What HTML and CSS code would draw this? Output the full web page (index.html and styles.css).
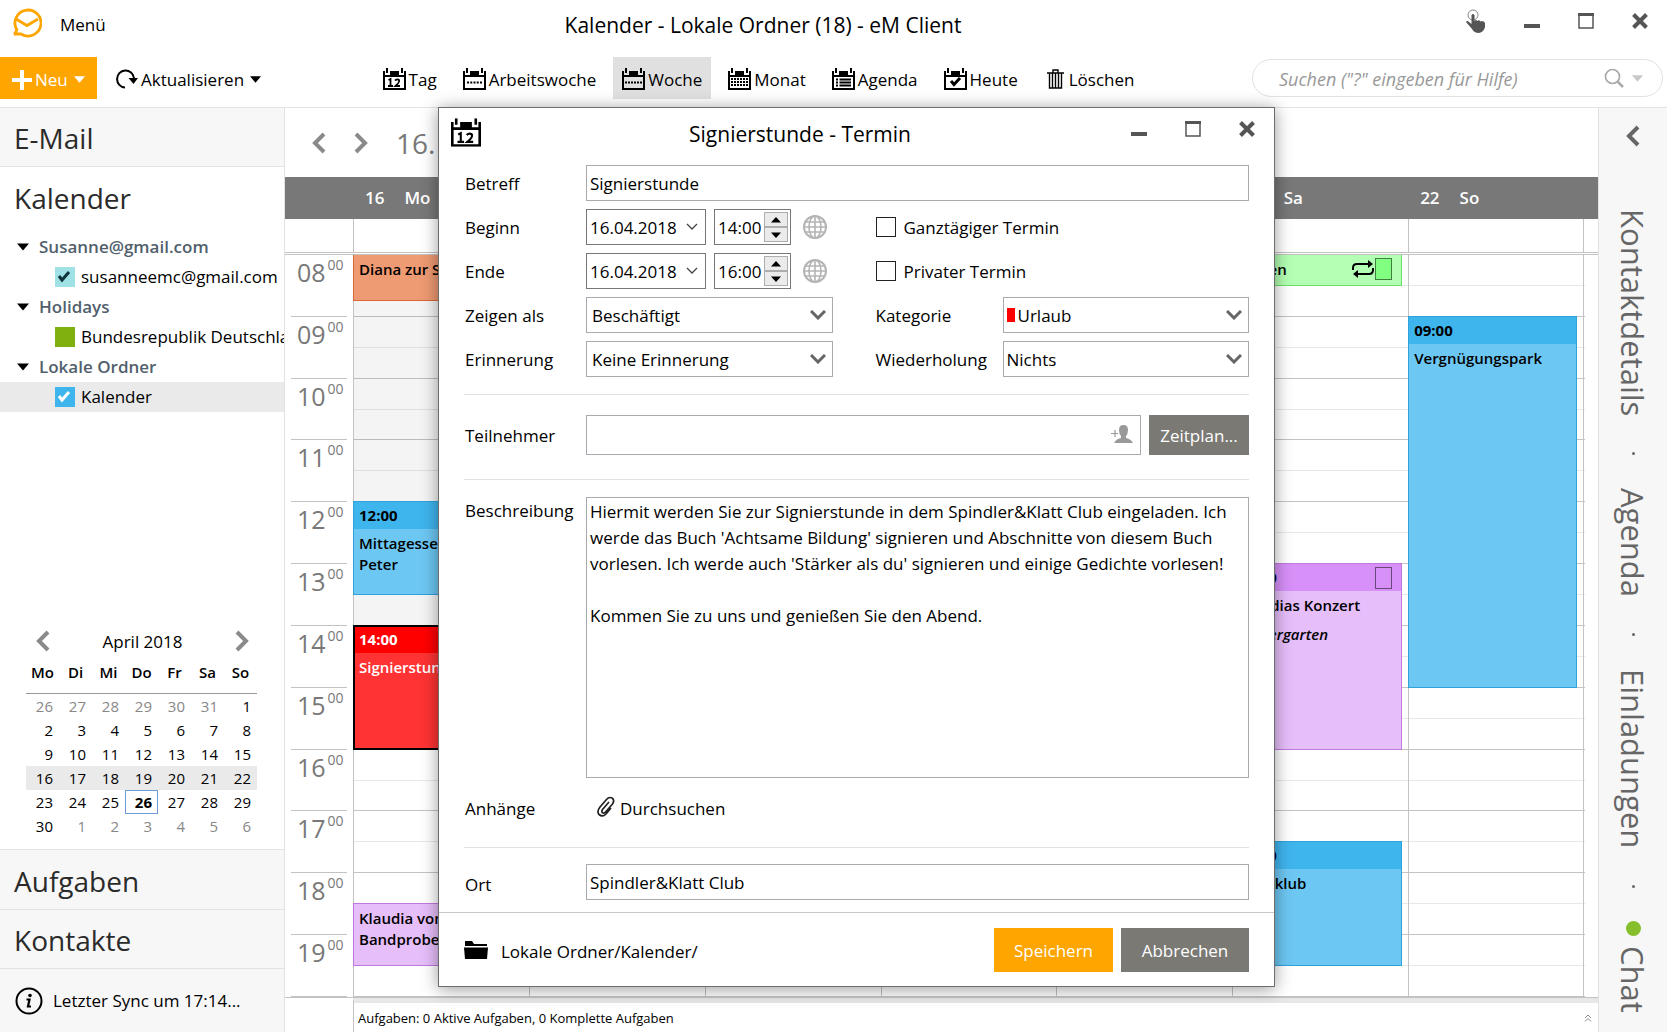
FILE: index.html
```html
<!DOCTYPE html>
<html lang="de">
<head>
<meta charset="utf-8">
<title>Kalender - Lokale Ordner (18) - eM Client</title>
<link rel="stylesheet" href="styles.css">
</head>
<body>
<svg class="sprite" aria-hidden="true">
  <symbol id="cal" viewBox="0 0 23 22">
    <path d="M1 8V21H22V8" fill="none" stroke="currentColor" stroke-width="2"/>
    <path d="M0 3H2V7H7V3H16V7H21V3H23V9H0Z" fill="currentColor"/>
    <path d="M4 0V5M19 0V5" stroke="currentColor" stroke-width="2"/>
  </symbol>
  <symbol id="left" viewBox="0 0 14 22"><path d="M12 2L3 11L12 20" fill="none" stroke="currentColor" stroke-width="4"/></symbol>
  <symbol id="right" viewBox="0 0 14 22"><path d="M2 2L11 11L2 20" fill="none" stroke="currentColor" stroke-width="4"/></symbol>
  <symbol id="tri" viewBox="0 0 12 7"><path d="M0 0H12L6 7Z" fill="currentColor"/></symbol>
  <symbol id="down" viewBox="0 0 16 10"><path d="M1 1L8 8L15 1" fill="none" stroke="currentColor" stroke-width="3"/></symbol>
  <symbol id="thin" viewBox="0 0 12 8"><path d="M1 1L6 6L11 1" fill="none" stroke="#444" stroke-width="1.3"/></symbol>
  <symbol id="min" viewBox="0 0 16 16"><path d="M0 13H16" stroke="currentColor" stroke-width="4"/></symbol>
  <symbol id="max" viewBox="0 0 16 16"><path d="M1 1H15V15H1Z" fill="none" stroke="currentColor" stroke-width="1.5"/><path d="M0 1.5H16" stroke="currentColor" stroke-width="3"/></symbol>
  <symbol id="close" viewBox="0 0 16 16"><path d="M1.500 1.500L14.500 14.500M14.500 1.500L1.500 14.500" stroke="currentColor" stroke-width="4"/></symbol>
  <symbol id="tick" viewBox="0 0 20 20"><path d="M4 9L7 13L14 5" fill="none" stroke="currentColor" stroke-width="3"/></symbol>
  <symbol id="globe" viewBox="0 0 24 24"><g fill="none" stroke="currentColor" stroke-width="1.6"><circle cx="12" cy="12" r="11" stroke-width="2"/><ellipse cx="12" cy="12" rx="6" ry="11"/><path d="M12 1V23M1 12H23M3 7H21M3 17H21"/></g></symbol>
</svg>

<div class="app">
  <header class="titlebar">
    <svg class="logo" viewBox="0 0 30 30"><g fill="none" stroke="#ffa500" stroke-width="2.800"><path d="M5 22A13 13 0 1 1 9 26L2 26Q4 25 5 21"/><path d="M4 11L15 17.500L26 11"/></g></svg>
    <button class="menu">Menü</button>
    <h1>Kalender - Lokale Ordner (18) - eM Client</h1>
    <div class="winctl">
      <button aria-label="Touch"><svg class="hand" viewBox="0 0 20 24"><circle cx="7" cy="6" r="5" fill="none" stroke="#888" stroke-width="1"/><path d="M5.500 6Q7 4 8.500 6V12Q10 10 11.500 12Q13 10.500 14.500 12.500Q17 11 19 14V18Q18 23 13 24Q8 24 6 20L0 13Q1 11 3 13L5.500 15Z" fill="currentColor"/></svg></button>
      <button aria-label="Minimieren"><svg><use href="#min"/></svg></button>
      <button aria-label="Maximieren"><svg><use href="#max"/></svg></button>
      <button aria-label="Schließen"><svg><use href="#close"/></svg></button>
    </div>
  </header>

  <nav class="toolbar">
    <div class="tools-left">
      <button class="new"><svg class="plus" viewBox="0 0 20 20"><path d="M10 0V20M0 10H20" stroke="#fff" stroke-width="4"/></svg>Neu<svg class="tri"><use href="#tri"/></svg></button>
      <button class="refresh"><svg class="refresh-icon" viewBox="0 0 22 20"><path d="M9 18.500A8.500 8.500 0 1 1 18 9" fill="none" stroke="#000" stroke-width="2"/><path d="M12.500 9H22L17.500 15Z"/></svg>Aktualisieren<svg class="tri"><use href="#tri"/></svg></button>
    </div>
    <div class="views">
      <button><svg class="cal" viewBox="0 0 23 22"><use href="#cal"/><path d="M5.500 12L7.500 11V18M5 18H10M12 12.500Q14.500 10.500 16 12Q17 14 12.500 18H17" fill="none" stroke="#000" stroke-width="1.800"/></svg>Tag</button>
      <button><svg class="cal" viewBox="0 0 23 22"><use href="#cal"/><path d="M4 14.500H19" stroke="#000" stroke-width="2" stroke-dasharray="2 1.250"/></svg>Arbeitswoche</button>
      <button class="active"><svg class="cal" viewBox="0 0 23 22"><use href="#cal"/><path d="M3 14.500H20" stroke="#000" stroke-width="2" stroke-dasharray="2 1"/></svg>Woche</button>
      <button><svg class="cal" viewBox="0 0 23 22"><use href="#cal"/><path d="M3 11H20M3 14H20M3 17H20" stroke="#000" stroke-width="2" stroke-dasharray="2 1"/></svg>Monat</button>
      <button><svg class="cal" viewBox="0 0 23 22"><use href="#cal"/><path d="M4 11.500H6M7.500 11.500H19M4 14.500H6M7.500 14.500H19M4 17.500H6M7.500 17.500H19" stroke="#000" stroke-width="2"/></svg>Agenda</button>
      <button><svg class="cal" viewBox="0 0 23 22"><use href="#cal"/><path d="M7 13L10 16.500L16 10" fill="none" stroke="#000" stroke-width="3"/></svg>Heute</button>
      <button><svg class="trash" viewBox="0 0 17 20"><path d="M0 4H17M6 4V1H11V4M2.500 4V19H14.500V4M5.500 4V19M8.500 4V19M11.500 4V19" fill="none" stroke="#000" stroke-width="1.400"/></svg>Löschen</button>
    </div>
    <label class="search">
      <input type="search" placeholder="Suchen (&quot;?&quot; eingeben für Hilfe)" aria-label="Suchen">
      <svg class="lens" viewBox="0 0 20 20"><circle cx="8.500" cy="8.500" r="7" fill="none" stroke="currentColor" stroke-width="1.700"/><path d="M13.500 13.500L19 19" stroke="currentColor" stroke-width="2.500"/></svg>
      <svg class="tri"><use href="#tri"/></svg>
    </label>
  </nav>

  <div class="body">
    <aside class="sidebar">
      <a class="section" href="#mail">E-Mail</a>
      <div class="current">
        <h2>Kalender</h2>
        <ul class="tree">
          <li class="group"><svg class="tri"><use href="#tri"/></svg>Susanne@gmail.com</li>
          <li class="leaf"><input type="checkbox" id="c1" checked><label for="c1"><svg class="box aqua"><use href="#tick"/></svg>susanneemc@gmail.com</label></li>
          <li class="group"><svg class="tri"><use href="#tri"/></svg>Holidays</li>
          <li class="leaf"><input type="checkbox" id="c2"><label for="c2"><svg class="box green"></svg>Bundesrepublik Deutschland</label></li>
          <li class="group"><svg class="tri"><use href="#tri"/></svg>Lokale Ordner</li>
          <li class="leaf selected"><input type="checkbox" id="c3" checked><label for="c3"><svg class="box blue"><use href="#tick"/></svg>Kalender</label></li>
        </ul>
        <div class="mini">
          <div class="mini-head">
            <button aria-label="Zurück"><svg class="chev"><use href="#left"/></svg></button>
            <span>April 2018</span>
            <button aria-label="Weiter"><svg class="chev"><use href="#right"/></svg></button>
          </div>
          <table>
            <thead><tr><th>Mo</th><th>Di</th><th>Mi</th><th>Do</th><th>Fr</th><th>Sa</th><th>So</th></tr></thead>
            <tbody>
              <tr><td class="out">26</td><td class="out">27</td><td class="out">28</td><td class="out">29</td><td class="out">30</td><td class="out">31</td><td>1</td></tr>
              <tr><td>2</td><td>3</td><td>4</td><td>5</td><td>6</td><td>7</td><td>8</td></tr>
              <tr><td>9</td><td>10</td><td>11</td><td>12</td><td>13</td><td>14</td><td>15</td></tr>
              <tr class="week"><td>16</td><td>17</td><td>18</td><td>19</td><td>20</td><td>21</td><td>22</td></tr>
              <tr><td>23</td><td>24</td><td>25</td><td class="today">26</td><td>27</td><td>28</td><td>29</td></tr>
              <tr><td>30</td><td class="out">1</td><td class="out">2</td><td class="out">3</td><td class="out">4</td><td class="out">5</td><td class="out">6</td></tr>
            </tbody>
          </table>
        </div>
      </div>
      <a class="section top" href="#tasks">Aufgaben</a>
      <a class="section" href="#contacts">Kontakte</a>
      <div class="sync"><svg viewBox="0 0 28 28"><circle cx="14" cy="14" r="12.500" fill="none" stroke="#000" stroke-width="2"/><circle cx="15" cy="8.500" r="1.800"/><path d="M11.500 12.500H14.500L13 19.500H16" fill="none" stroke="#000" stroke-width="2.200"/></svg>Letzter Sync um 17:14...</div>
    </aside>

    <main class="calendar">
      <div class="period">
        <button aria-label="Vorige Woche"><svg class="chev"><use href="#left"/></svg></button>
        <button aria-label="Nächste Woche"><svg class="chev"><use href="#right"/></svg></button>
        <span>16. - 22. April 2018</span>
      </div>
      <div class="dayheads">
        <div><b>16</b><b>Mo</b></div><div><b>17</b><b>Di</b></div><div><b>18</b><b>Mi</b></div><div><b>19</b><b>Do</b></div><div><b>20</b><b>Fr</b></div><div><b>21</b><b>Sa</b></div><div><b>22</b><b>So</b></div>
      </div>
      <div class="allday"><div></div><div></div><div></div><div></div><div></div><div></div><div></div></div>
      <div class="grid">
        <ol class="hours">
          <li>08<sup>00</sup></li><li>09<sup>00</sup></li><li>10<sup>00</sup></li><li>11<sup>00</sup></li><li>12<sup>00</sup></li><li>13<sup>00</sup></li><li>14<sup>00</sup></li><li>15<sup>00</sup></li><li>16<sup>00</sup></li><li>17<sup>00</sup></li><li>18<sup>00</sup></li><li>19<sup>00</sup></li>
        </ol>
        <div class="slots">
          <i></i><i></i><i></i><i></i><i></i><i></i><i></i><i></i><i></i><i></i><i></i><i></i><i></i><i></i><i></i><i></i><i></i><i></i><i></i><i></i><i></i><i></i><i></i><i></i>
        </div>
        <div class="days">
          <div class="day closed">
            <article class="event orange s0800 e0845"><p>Diana zur Schule</p></article>
            <article class="event sky s1200 e1330"><h3>12:00</h3><p>Mittagessen mit<br>Peter</p></article>
            <article class="event red s1400 e1600"><h3>14:00</h3><p>Signierstunde</p></article>
            <article class="event violet s1830 e1930"><p>Klaudia von der<br>Bandprobe</p></article>
          </div>
          <div class="day"></div><div class="day"></div><div class="day"></div><div class="day"></div>
          <div class="day">
            <article class="event lime s0800 e0830"><p>Joggen</p><span class="marks"><svg class="repeat" viewBox="0 0 22 18"><path d="M1 10V8Q1 4 5 4H17M21 8V10Q21 14 17 14H5" fill="none" stroke="#000" stroke-width="2"/><path d="M16 0L21 4L16 8ZM6 10L1 14L6 18Z"/></svg><i class="mark"></i></span></article>
            <article class="event violet s1300 e1600"><h3>13:00</h3><p>Klaudias Konzert</p><p class="place">Kindergarten</p><span class="marks"><i class="mark"></i></span></article>
            <article class="event sky s1730 e1930"><h3>17:30</h3><p>Buchklub</p></article>
          </div>
          <div class="day">
            <article class="event sky s0900 e1500"><h3>09:00</h3><p>Vergnügungspark</p></article>
          </div>
        </div>
      </div>
      <footer class="tasks"><span>Aufgaben: 0 Aktive Aufgaben, 0 Komplette Aufgaben</span><svg viewBox="0 0 8 8"><path d="M1 4L4 1L7 4M1 7.500L4 4.500L7 7.500" fill="none" stroke="#888" stroke-width="1"/></svg></footer>
    </main>

    <aside class="rail">
      <button aria-label="Aufklappen"><svg class="chev"><use href="#left"/></svg></button>
      <div class="rail-links">
        <a href="#details">Kontaktdetails</a><i></i><a href="#agenda">Agenda</a><i></i><a href="#invites">Einladungen</a><i></i><b></b><a href="#chat">Chat</a>
      </div>
    </aside>
  </div>

  <section class="dialog" role="dialog" aria-labelledby="dlg">
    <header>
      <svg class="dlg-icon" viewBox="0 0 23 22"><use href="#cal"/><path d="M5.500 12.500L7.500 11.500V18M5 18.200H10M12 13Q14 11 16 12.500Q17 14.500 12.500 18.200H17" fill="none" stroke="#000" stroke-width="1.600"/></svg>
      <h2 id="dlg">Signierstunde - Termin</h2>
      <div class="winctl">
        <button aria-label="Minimieren"><svg><use href="#min"/></svg></button>
        <button aria-label="Maximieren"><svg><use href="#max"/></svg></button>
        <button aria-label="Schließen"><svg><use href="#close"/></svg></button>
      </div>
    </header>
    <form>
      <div class="fields">
        <label for="subject">Betreff</label>
        <input class="wide" id="subject" type="text" value="Signierstunde">

        <label for="d1">Beginn</label>
        <div class="when">
          <span class="date"><input id="d1" type="text" value="16.04.2018"><svg><use href="#thin"/></svg></span>
          <span class="time"><input type="text" value="14:00" aria-label="Beginn Uhrzeit"><span class="spin"><button type="button" aria-label="Später"><svg viewBox="0 0 10 6"><path d="M0 5.500H10L5 0Z"/></svg></button><button type="button" aria-label="Früher"><svg viewBox="0 0 10 6"><path d="M0 .5H10L5 6Z"/></svg></button></span></span>
          <svg class="globe"><use href="#globe"/></svg>
        </div>
        <label class="check"><input type="checkbox">Ganztägiger Termin</label>

        <label for="d2">Ende</label>
        <div class="when">
          <span class="date"><input id="d2" type="text" value="16.04.2018"><svg><use href="#thin"/></svg></span>
          <span class="time"><input type="text" value="16:00" aria-label="Ende Uhrzeit"><span class="spin"><button type="button" aria-label="Später"><svg viewBox="0 0 10 6"><path d="M0 5.500H10L5 0Z"/></svg></button><button type="button" aria-label="Früher"><svg viewBox="0 0 10 6"><path d="M0 .5H10L5 6Z"/></svg></button></span></span>
          <svg class="globe"><use href="#globe"/></svg>
        </div>
        <label class="check"><input type="checkbox">Privater Termin</label>

        <label for="show">Zeigen als</label>
        <span class="select"><select id="show"><option>Beschäftigt</option></select><svg><use href="#down"/></svg></span>
        <label class="second" for="cat">Kategorie</label>
        <span class="select swatch"><select id="cat"><option>Urlaub</option></select><svg><use href="#down"/></svg></span>

        <label for="rem">Erinnerung</label>
        <span class="select"><select id="rem"><option>Keine Erinnerung</option></select><svg><use href="#down"/></svg></span>
        <label class="second" for="rep">Wiederholung</label>
        <span class="select tight"><select id="rep"><option>Nichts</option></select><svg><use href="#down"/></svg></span>
      </div>
      <hr>
      <div class="row people">
        <label for="att">Teilnehmer</label>
        <span class="att"><input id="att" type="text"><svg viewBox="0 0 22 18"><path d="M4 5V12M0 8.500H7" stroke="#999" stroke-width="1.200"/><path d="M8 5Q8 0 12.500 0Q17 0 17 5Q17 9 15 11V13Q20 14 22 18H3Q5 14 10 13V11Q8 9 8 5Z" fill="#999"/></svg></span>
        <button type="button" class="btn grey">Zeitplan...</button>
      </div>
      <hr>
      <div class="row desc">
        <label for="desc">Beschreibung</label>
        <textarea id="desc">Hiermit werden Sie zur Signierstunde in dem Spindler&amp;Klatt Club eingeladen. Ich
werde das Buch 'Achtsame Bildung' signieren und Abschnitte von diesem Buch
vorlesen. Ich werde auch 'Stärker als du' signieren und einige Gedichte vorlesen!

Kommen Sie zu uns und genießen Sie den Abend.</textarea>
      </div>
      <div class="row files">
        <label for="browse">Anhänge</label>
        <button type="button" id="browse" class="browse"><svg viewBox="0 0 20 22"><path d="M13 6L6.500 13.500Q5 16 7 17Q8.500 17.500 10 15.500L16.500 8Q19 4 16 2Q13 .5 10.500 3.500L4 11Q.5 15.500 3 18.500Q6.500 21.500 10 18L15 12" fill="none" stroke="#222" stroke-width="1.700"/></svg>Durchsuchen</button>
      </div>
      <hr>
      <div class="row">
        <label for="ort">Ort</label>
        <input id="ort" type="text" value="Spindler&amp;Klatt Club">
      </div>
    </form>
    <footer>
      <svg class="folder" viewBox="0 0 24 18"><path d="M1 0H8L10 3H23V5H1ZM0 6.500H24L23 18H1Z"/></svg>
      <span>Lokale Ordner/Kalender/</span>
      <button class="btn save">Speichern</button>
      <button class="btn grey cancel">Abbrechen</button>
    </footer>
  </section>
</div>
</body>
</html>
```

FILE: styles.css
```css
* { box-sizing: border-box; }
body {
  margin: 0;
  background: #fff;
  color: #000;
  font: 17px/24px "Open Sans", "Noto Sans", sans-serif;
}
.sprite { display: none; }
svg { display: block; flex: none; }
h1, h2, h3, p, ul, ol { margin: 0; padding: 0; font-weight: 400; list-style: none; }
a { color: inherit; text-decoration: none; }
button, input, select, textarea { font: inherit; color: inherit; margin: 0; padding: 0; border: 0; background: none; border-radius: 0; outline: 0; }
button { display: flex; align-items: center; white-space: nowrap; }

.app { position: relative; display: flex; flex-direction: column; min-height: 100vh; }

/* title bar */
.titlebar { display: grid; grid-template-columns: 60px minmax(0, 1fr) auto minmax(0, 1fr) auto; align-items: center; height: 50px; padding-right: 19px; }
.logo { width: 30px; height: 30px; margin: 0 0 4px 12px; }
.menu { justify-self: start; }
h1 { font-size: 21px; line-height: 28px; }
.winctl { display: flex; justify-content: flex-end; gap: 38px; grid-column-end: -1; color: #555; padding-bottom: 8px; }
.winctl svg { width: 16px; height: 16px; }
.winctl .hand { width: 20px; height: 24px; }

/* toolbar */
.toolbar { display: flex; justify-content: space-between; align-items: center; height: 58px; padding: 7px 4px 8px 0; border-bottom: 1px solid #e2e2e2; }
.tools-left, .views { display: flex; }
.tools-left { gap: 10px; }
.views button, .new, .refresh { height: 42px; gap: 3px; padding: 3px 9px 0; }
.toolbar .new { width: 97px; background: #ffa500; color: #fff; padding: 3px 12px 0; }
.plus { width: 20px; height: 20px; }
.toolbar .tri { width: 11px; height: 7px; margin-left: 3px; }
.refresh-icon { width: 22px; height: 20px; margin-bottom: 2px; }
.views { gap: 8px; margin-right: 5px; }
.views .active { background: #e0e0e0; }
.cal { width: 23px; height: 22px; margin-bottom: 1px; }
.trash { width: 17px; height: 20px; margin: 0 2px 2px 3px; }
.search { display: flex; align-items: center; gap: 8px; width: 411px; height: 38px; padding: 0 19px 0 26px; border: 1px solid #e2e2e2; border-radius: 19px; color: #aaa; }
.search input { flex: 1; min-width: 0; padding-top: 2px; font-size: 18px; font-style: italic; appearance: none; }
.search input::placeholder { color: #999; opacity: 1; }
.lens { width: 20px; height: 20px; }
.search .tri { margin-left: 0; color: #c8c8c8; }

.body { display: flex; flex: 1; }

/* left sidebar */
.sidebar { display: flex; flex-direction: column; width: 285px; flex: none; border-right: 1px solid #e2e2e2; background: #f7f7f7; }
.section { display: block; height: 59px; padding: 9px 14px; border-bottom: 1px solid #e2e2e2; font-size: 28px; line-height: 42px; color: #2b2b2b; }
.section.top { height: 61px; padding-top: 10px; border-top: 1px solid #e2e2e2; }
.current { display: flex; flex-direction: column; flex: 1; background: #fff; overflow: hidden; }
.current h2 { padding: 9px 14px 11px; font-size: 28px; line-height: 44px; color: #2b2b2b; }
.tree li { display: flex; align-items: center; height: 30px; white-space: nowrap; }
.tree { padding-top: 1px; }
.tree .group { gap: 10px; padding-left: 17px; font-weight: 600; color: #51606c; }
.tree .tri { width: 12px; height: 8px; color: #000; }
.leaf { padding-left: 55px; }
.leaf input { position: absolute; opacity: 0; }
.leaf label { display: flex; align-items: center; gap: 6px; }
.selected { background: #eaeaea; }
.box { width: 20px; height: 20px; }
.aqua { background: #a0e1e6; color: #10333c; }
.green { background: #7fb010; }
.blue { background: #3fb5ee; color: #fff; }
.mini { margin-top: auto; padding: 0 27px 11px 26px; }
.mini-head { display: flex; justify-content: space-between; padding: 0 8px 0 10px; height: 32px; }
.chev { width: 14px; height: 22px; color: #8a8a8a; }
.mini-head button { height: 22px; }
.mini table { width: 100%; border-collapse: collapse; table-layout: fixed; font-size: 15px; line-height: 24px; }
.mini th { height: 32px; padding: 0 0 14px; font-weight: 600; border-bottom: 1px solid #999; text-align: center; vertical-align: bottom; line-height: 14px; }
.mini td { height: 24px; padding: 0 6px 0 0; text-align: right; }
.out { color: #888; }
.week { background: #eaeaea; }
.mini .today { font-weight: 700; outline: 1px solid #6f9bd8; outline-offset: -1px; }
.sync { display: flex; align-items: center; gap: 10px; height: 63px; padding: 1px 15px 0; }
.sync svg { width: 28px; height: 28px; }

/* week view */
.calendar { display: flex; flex-direction: column; flex: 1; min-width: 0; }
.period { display: flex; align-items: center; gap: 28px; height: 69px; padding-left: 27px; font-size: 28px; color: #787878; }
.dayheads, .allday, .days { display: grid; grid-template-columns: repeat(7, 1fr); }
.dayheads { height: 42px; padding: 0 14px 0 68px; background: #787878; color: #fff; }
.dayheads div { display: flex; align-items: center; gap: 20px; padding-left: 12px; }
.dayheads b { font-weight: 600; }
.allday { height: 36px; padding: 0 14px 0 68px; border-bottom: 3px double #c3c3c3; }
.allday div, .day { border-left: 1px solid #c3c3c3; }
.allday div:last-child, .day:last-child { border-right: 1px solid #c3c3c3; }
.grid { flex: 1; display: grid; grid-template-columns: 68px 1fr; padding-right: 13px; border-bottom: 1px solid #c3c3c3; }
.hours { display: grid; grid-template-rows: repeat(12, 1fr); padding: 0 6px; color: #787878; font-size: 25px; line-height: 34px; }
.hours li { display: flex; border-bottom: 1px solid #c3c3c3; padding-left: 6px; gap: 2px; min-height: 0; }
.hours sup { font-size: 14px; line-height: 20px; vertical-align: top; }
.slots, .days { grid-column: 2; grid-row: 1; }
.hours { grid-row: 1; }
.slots { display: grid; grid-template-rows: repeat(24, 1fr); }
.slots i { border-bottom: 1px solid #e8e8e8; }
.slots i:nth-child(even) { border-color: #c3c3c3; }
.days { margin-right: 1px; }
.day { display: grid; grid-template-rows: repeat(48, minmax(0, 1fr)); padding-right: 6px; }
.closed { background: linear-gradient(rgba(0, 0, 0, .045), rgba(0, 0, 0, .045)) 0 0 / 100% 50% no-repeat; }
.event { position: relative; grid-column: 1; margin: -1px 0 0 -1px; border: 1px solid; font-size: 15px; line-height: 21px; min-width: 0; overflow: hidden; }
.event h3 { padding: 3px 5px 4px; font-size: 15px; font-weight: 700; line-height: 20px; }
.event p { padding: 4px 5px; font-weight: 600; }
.event .place { font-style: italic; }
.s0800 { grid-row-start: 1; margin-top: 0; border-top: 0; }
.s0900 { grid-row-start: 5; }
.s1200 { grid-row-start: 17; }
.s1300 { grid-row-start: 21; }
.s1400 { grid-row-start: 25; }
.s1730 { grid-row-start: 39; }
.s1830 { grid-row-start: 43; }
.e0830 { grid-row-end: 3; }
.e0845 { grid-row-end: 4; }
.e1330 { grid-row-end: 23; }
.e1500 { grid-row-end: 29; }
.e1600 { grid-row-end: 33; }
.e1930 { grid-row-end: 47; }
.orange { background: #ee9a72; border-color: #d8683a; }
.sky { background: #6dc7f3; border-color: #2fa2dc; }
.sky h3 { background: #3fb5ee; }
.red { background: #f33; border: 2px solid #000; color: #fff; }
.red h3 { padding: 2px 4px 4px; background: #f00; }
.red p { padding: 4px; }
.violet { background: #e6befa; border-color: #c078e0; }
.violet h3 { background: #d790f8; }
.lime { background: #b3ffb3; border-color: #68e068; }
.marks { position: absolute; top: 3px; right: 9px; display: flex; align-items: center; gap: 1px; }
.mark { width: 17px; height: 22px; border: 1px solid rgba(0, 0, 0, .5); }
.lime .mark { background: #80ff80; }
.repeat { width: 22px; height: 18px; }
.tasks { display: flex; align-items: center; justify-content: space-between; height: 34px; margin-left: 68px; padding: 0 6px 0 4px; border-left: 1px solid #c3c3c3; border-top: 5px solid #e5e7e8; font-size: 13px; }
.tasks svg { width: 8px; height: 8px; }

/* right rail */
.rail { display: flex; flex-direction: column; align-items: center; width: 69px; flex: none; border-left: 1px solid #e2e2e2; background: #f7f7f7; color: #666; }
.rail > button { padding-top: 17px; }
.rail .chev { color: #666; }
.rail-links { display: flex; align-items: center; flex: 1; writing-mode: vertical-rl; margin-top: 62px; font-size: 31px; line-height: 40px; }
.rail-links i { width: 3px; height: 3px; margin: 36px 0 33px; border-radius: 50%; background: #666; }
.rail-links b { width: 15px; height: 15px; margin-bottom: 10px; border-radius: 50%; background: #86bf2b; }

/* appointment window */
.dialog { position: absolute; top: 107px; left: 438px; right: 392px; background: #fff; border: 1px solid #6d6d6d; box-shadow: 0 2px 16px rgba(0, 0, 0, .4); }
.dialog > header { display: grid; grid-template-columns: 30px 1fr auto 1fr auto; align-items: center; height: 57px; padding: 0 19px 8px 12px; }
.dlg-icon { width: 30px; height: 29px; }
.dialog h2 { grid-column: 3; padding: 2px 12px 0 0; font-size: 21px; line-height: 28px; }
form { padding: 0 25px 12px; }
.fields { display: grid; grid-template-columns: 122px 1fr 43px 127px 1fr; grid-auto-rows: 36px; row-gap: 8px; align-items: center; }
.fields .wide { grid-column: 2 / -1; }
form label { padding: 2px 0 0 1px; }
.dialog form input:not([type="checkbox"]), .dialog select, .dialog textarea { width: 100%; height: 36px; padding: 0 3px; border: 1px solid #a9a9b0; background: #fff; }
.when { display: flex; align-items: center; gap: 8px; }
.date, .time, .select, .att { position: relative; display: block; }
.date { width: 120px; }
.time { width: 77px; }
.dialog .when input:not([type="checkbox"]) { display: block; border-color: #777; }
.date svg { position: absolute; right: 8px; top: 14px; width: 12px; height: 8px; }
.spin { position: absolute; right: 3px; top: 3px; display: grid; width: 24px; height: 30px; }
.spin button { justify-content: center; border: 1px solid #adadad; background: #ebebeb; }
.spin svg { width: 10px; height: 6px; }
.globe { width: 24px; height: 24px; margin-left: 4px; color: #b4b4b4; }
form .check { grid-column: 4 / -1; display: flex; align-items: center; gap: 8px; padding-left: 0; }
.check input { appearance: none; width: 20px; height: 20px; margin-bottom: 2px; border: 1px solid #222; }
form .second { grid-column: 4; padding-left: 0; }
.select select { display: block; appearance: none; }
.dialog .select select { padding: 2px 0 0 5px; }
.dialog .tight select { padding-left: 3px; }
.dialog .swatch select { padding-left: 14px; }
.select svg { position: absolute; right: 7px; top: 13px; width: 16px; height: 10px; color: #666; }
.swatch::before { content: ""; position: absolute; left: 4px; top: 11px; width: 8px; height: 14px; background: #f00; }
hr { margin: 17px 0 20px; border: 0; border-top: 1px solid #e2e2e2; }
.row { display: grid; grid-template-columns: 122px 1fr; align-items: center; }
.people { grid-template-columns: 122px 1fr 100px; }
.dialog form .people input { height: 40px; display: block; }
.att { margin-right: 8px; }
.att svg { position: absolute; right: 8px; top: 10px; width: 22px; height: 18px; }
.btn { justify-content: center; height: 44px; padding-top: 2px; color: #fff; }
.people .btn { height: 40px; }
.grey { background: #7a7974; }
.save { background: #ffa500; width: 119px; }
.cancel { width: 128px; }
.people + hr { margin: 24px 0 17px; }
.desc { align-items: start; }
.dialog .desc textarea { display: block; height: 281px; padding: 1px 3px; line-height: 26px; resize: none; white-space: pre; overflow: hidden; }
.files { height: 60px; }
.browse { gap: 4px; padding: 2px 0 0 10px; }
.browse svg { width: 20px; height: 22px; margin-bottom: 4px; }
.files + hr { margin: 9px 0 16px; }
.row label[for="ort"] { padding-top: 6px; }
.dialog > footer { display: flex; align-items: center; gap: 8px; height: 74px; padding: 0 25px; border-top: 1px solid #c8c8c8; }
.dialog > footer span { flex: 1; padding: 4px 0 0 5px; }
.folder { width: 24px; height: 18px; }
```
